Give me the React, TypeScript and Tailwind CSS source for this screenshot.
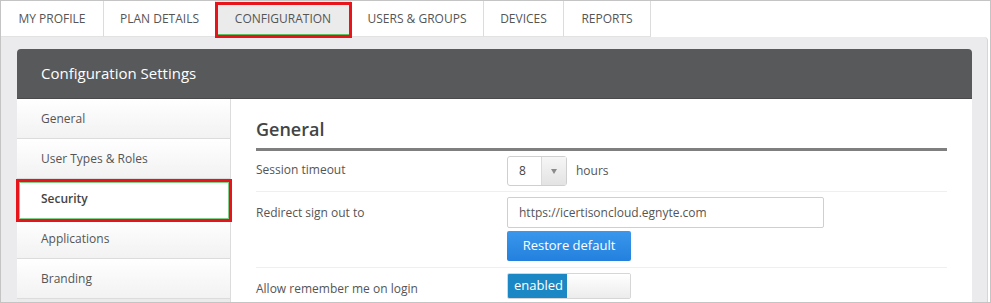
import { ChevronDown } from "lucide-react";

const tabs = [
  { label: "MY PROFILE", w: "w-[103px]" },
  { label: "PLAN DETAILS", w: "w-[112px]" },
  { label: "CONFIGURATION", w: "w-[135px]", active: true },
  { label: "USERS & GROUPS", w: "w-[133px]" },
  { label: "DEVICES", w: "w-[80px]" },
  { label: "REPORTS", w: "w-[87px]" },
];

const menu = ["General", "User Types & Roles", "Security", "Applications", "Branding"];

export default function App() {
  return (
    <div
      className="relative w-[991px] h-[303px] overflow-hidden border border-[#c4c4c4] bg-white text-[#555]"
      style={{ fontFamily: '"Open Sans", "Liberation Sans", sans-serif' }}
    >
      {/* Tab strip */}
      <div className="flex h-[36px]">
        {tabs.map((t) => (
          <div
            key={t.label}
            className={`${t.w} flex items-center justify-center border-r border-[#dcdcdc] text-[12px] ${
              t.active ? "bg-[#ebebeb]" : "bg-white border-b border-b-[#e2e2e2]"
            } last:rounded-tr-[4px]`}
          >
            {t.label}
          </div>
        ))}
        <div className="flex-1" />
      </div>

      {/* Grey frame */}
      <div className="h-[265px] mr-[2px] rounded-tr-[4px] border-r border-[#d6d6d6] bg-[#ebebed] pl-[16px] pr-[15px] pt-[12px]">
        <div className="flex flex-col h-full">
          {/* Header */}
          <div className="h-[50px] shrink-0 flex items-center rounded-t-[4px] bg-[#58595b] border-b border-[#4a4a4c] pl-[24px] text-[15px] text-white">
            Configuration Settings
          </div>

          <div className="flex flex-1 bg-white">
            {/* Sidebar */}
            <div className="w-[214px] shrink-0 border-r border-[#dcdcdc] bg-[#ebebed]">
              {menu.map((m) => (
                <div
                  key={m}
                  className={`h-[40px] flex items-center pl-[24px] text-[12px] border-b border-[#dcdcdc] ${
                    m === "Security"
                      ? "bg-white font-semibold text-[#444]"
                      : "bg-gradient-to-b from-white to-[#f2f2f2]"
                  }`}
                >
                  {m}
                </div>
              ))}
            </div>

            {/* Content */}
            <div className="flex-1 px-[25px] text-[12px]">
              <div className="pt-[18px] pb-[7px] border-b-[3px] border-[#7f7f7f] text-[18px] leading-[24px] font-semibold text-[#444]">
                General
              </div>

              <div className="flex items-center h-[41px] border-b border-[#efefef]">
                <div className="w-[251px] -mt-[2px]">Session timeout</div>
                <div className="flex h-[30px] w-[60px] rounded-[3px] border border-[#cfcfcf]">
                  <div className="flex-1 flex items-center pl-[11px] text-[#444]">8</div>
                  <div className="w-[25px] flex items-center justify-center border-l border-[#dadada] bg-gradient-to-b from-[#f6f6f6] to-[#e3e3e3]">
                    <ChevronDown className="hidden" />
                    <span className="block w-0 h-0 border-l-[3px] border-r-[3px] border-t-[5px] border-l-transparent border-r-transparent border-t-[#8a8a8a]" />
                  </div>
                </div>
                <div className="ml-[9px]">hours</div>
              </div>

              <div className="flex h-[76px] border-b border-[#efefef]">
                <div className="w-[251px] pt-[12px]">Redirect sign out to</div>
                <div className="pt-[5px]">
                  <div className="h-[31px] w-[317px] flex items-center pl-[11px] rounded-[2px] border border-[#cfcfcf]">
                    https://icertisoncloud.egnyte.com
                  </div>
                  <div className="mt-[3px] h-[30px] w-[124px] flex items-center justify-center rounded-[2px] bg-gradient-to-b from-[#3a97ec] to-[#2380dd] text-[13px] text-white">
                    Restore default
                  </div>
                </div>
              </div>

              <div className="flex h-[34px]">
                <div className="w-[251px] pt-[12px]">Allow remember me on login</div>
                <div className="flex h-[26px] w-[124px] mt-[5px] rounded-[2px] border border-[#d6d6d6] overflow-hidden">
                  <div className="w-[59px] flex items-center pl-[6px] bg-[#1b87c4] text-[13px] text-white">enabled</div>
                  <div className="flex-1 bg-gradient-to-b from-white to-[#ececec]" />
                </div>
              </div>
            </div>
          </div>
        </div>
      </div>

      {/* Annotation boxes */}
      <div className="absolute left-[214px] top-[1px] w-[137px] h-[36px] border-[3px] border-[#e8141c] shadow-[inset_0_-1px_0_#5dc160]" />
      <div className="absolute left-[15px] top-[178px] w-[216px] h-[43px] border-[3px] border-[#e8141c] shadow-[inset_0_0_0_1px_#7fd08a]" />
    </div>
  );
}
